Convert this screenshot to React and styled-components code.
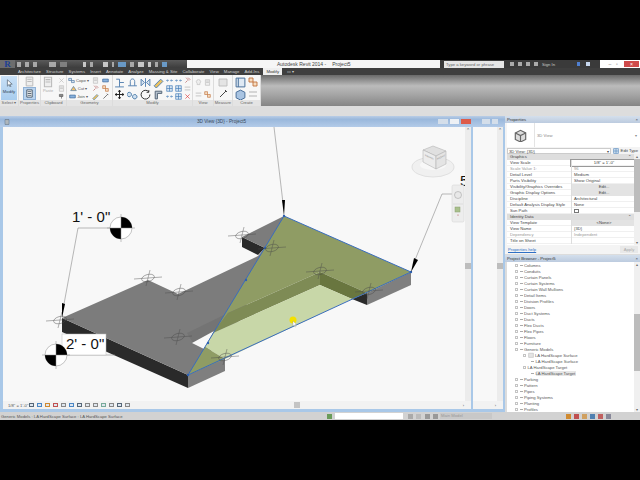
import React from "react";
import styled, { createGlobalStyle } from "styled-components";

const GlobalStyle = createGlobalStyle`
  html, body { margin: 0; padding: 0; background: #000; }
  body { font-family: "Liberation Sans", Arial, sans-serif; }
`;

const Screen = styled.div`
  width: 640px;
  height: 480px;
  display: flex;
  flex-direction: column;
  background: #000;
  overflow: hidden;
`;

const Letterbox = styled.div`
  height: 60px;
  flex: none;
  background: #000;
`;

const TitleBar = styled.div`
  height: 8px;
  flex: none;
  display: flex;
  background: #4a4a4a;
`;

const Logo = styled.div`
  width: 15px;
  display: flex;
  justify-content: center;
  color: #1c3f94;
  background: #6d6d6d;
  font: bold 9px/8px "Liberation Serif", serif;
`;

const QuickAccess = styled.div`
  width: 172px;
  display: flex;
  align-items: center;
  gap: 4px;
  padding-left: 2px;
  box-sizing: border-box;
  background: linear-gradient(#5a5a5a, #3c3c3c);
`;

const QuickIcon = styled.span`
  width: ${(p) => p.$w || 4}px;
  height: 5px;
  margin-right: ${(p) => p.$gap || 0}px;
  background: ${(p) => p.$c || "#b8b8b8"};
  opacity: 0.85;
`;

const TitleCenter = styled.div`
  width: 253px;
  padding-left: 90px;
  box-sizing: border-box;
  background: #f6f6f6;
  color: #444;
  font-size: 5px;
  line-height: 8px;
  white-space: nowrap;
`;

const ProjectName = styled.span`
  margin-left: 6px;
`;

const Help = styled.div`
  flex: 1;
  display: flex;
  align-items: center;
  gap: 4px;
  color: #ccc;
  font-size: 4.2px;
  background: #3a3a3a;
`;

const SearchBox = styled.div`
  width: 60px;
  height: 7px;
  line-height: 7px;
  padding-left: 2px;
  margin-left: 4px;
  margin-right: 2px;
  box-sizing: border-box;
  background: #e6e6e6;
  color: #666;
  white-space: nowrap;
`;

const HelpIcon = styled.span`
  width: ${(p) => p.$w || 4}px;
  height: 4px;
  background: ${(p) => p.$c || "#aaa"};
  margin-left: ${(p) => p.$ml || 0}px;
`;

const WindowButtons = styled.div`
  width: 40px;
  display: flex;
  align-items: center;
  background: #fff;
  color: #666;
  font-size: 5px;
`;

const WinButton = styled.div`
  width: ${(p) => p.$w || 8}px;
  height: 6px;
  line-height: 6px;
  text-align: center;
  color: ${(p) => (p.$close ? "#fff" : "#777")};
  background: ${(p) => (p.$close ? "#cf4b4b" : "transparent")};
  margin-left: ${(p) => p.$ml || 0}px;
`;

const TabBar = styled.div`
  height: 7px;
  flex: none;
  display: flex;
  gap: 5.1px;
  padding-left: 18px;
  background: #3f3f3f;
`;

const Tab = styled.div`
  font-size: 4.3px;
  line-height: 7px;
  white-space: nowrap;
  color: ${(p) => (p.$active ? "#333" : "#d4d4d4")};
  ${(p) => p.$active && "background: #efefef; padding: 0 3px; margin-left: -1px;"}
`;

const Ribbon = styled.div`
  height: 31px;
  flex: none;
  display: flex;
  background: linear-gradient(#6a6a6a 0%, #bbbbbb 35%, #a8a8a8 60%, #858585 100%);
`;

const RibbonPanel = styled.div`
  width: ${(p) => p.$w}px;
  display: flex;
  flex-direction: column;
  background: #f7f7f7;
  border-right: 1px solid #dcdcdc;
  box-sizing: border-box;
`;

const PanelBody = styled.div`
  flex: 1;
  display: flex;
  gap: ${(p) => p.$gap || 1}px;
  padding: 1px 1px 0;
  justify-content: ${(p) => (p.$center ? "center" : "flex-start")};
`;

const PanelLabel = styled.div`
  height: 6px;
  flex: none;
  background: #e4e4e4;
  color: #666;
  text-align: center;
  font-size: 4.2px;
  line-height: 6px;
  white-space: nowrap;
`;

const ModifyButton = styled.div`
  flex: 1;
  display: flex;
  flex-direction: column;
  align-items: center;
  gap: 2px;
  padding-top: 3px;
  background: linear-gradient(#c9e0f6, #a9cdee);
  color: #345;
  font-size: 4.2px;
`;

const ToolColumn = styled.div`
  display: flex;
  flex-direction: column;
  justify-content: ${(p) => p.$just || "space-around"};
  align-items: center;
  width: ${(p) => p.$w || "auto"};
  gap: ${(p) => p.$gap || 0}px;
`;

const ToolRow = styled.div`
  display: flex;
  align-items: center;
  gap: 1px;
  font-size: 4.2px;
  color: #555;
  white-space: nowrap;
`;

const SelectedTool = styled.div`
  padding: 1px;
  background: #b9d3ee;
  border: 1px solid #8fb1d6;
  display: flex;
`;

const FadedLabel = styled.div`
  font-size: 4px;
  color: #aaa;
`;

const Band = styled.div`
  height: 10px;
  flex: none;
  background: #dddddd;
`;

const Main = styled.div`
  flex: 1;
  min-height: 0;
  display: flex;
  background: #d8d8d8;
`;

const ViewArea = styled.div`
  width: 505px;
  display: flex;
  flex-direction: column;
`;

const ViewHeader = styled.div`
  height: 11px;
  flex: none;
  display: grid;
  grid-template-columns: 193px 1fr auto;
  align-items: center;
  background: linear-gradient(#b9cde6, #9ab8dc 30%, #b3cbe8);
  color: #3c4a5a;
  font-size: 4.7px;
  padding-left: 4px;
  box-sizing: border-box;
  white-space: nowrap;
`;

const ViewButtons = styled.div`
  display: flex;
  align-items: center;
  gap: 2px;
  padding-right: 7px;
`;

const ViewButton = styled.span`
  width: ${(p) => p.$w || 8}px;
  height: 5px;
  background: ${(p) => p.$c || "#d4deea"};
  margin-left: ${(p) => p.$ml || 0}px;
`;

const Panes = styled.div`
  flex: 1;
  min-height: 0;
  display: flex;
  gap: 2px;
  padding: 0 2px 3px 3px;
  background: #a9c8e8;
`;

const Pane = styled.div`
  display: flex;
  flex-direction: column;
  background: #f8f8f8;
  flex: ${(p) => (p.$grow ? 1 : "none")};
  width: ${(p) => p.$w || "auto"};
  min-width: 0;
`;

const PaneBody = styled.div`
  flex: 1;
  min-height: 0;
  display: flex;
  justify-content: flex-end;
`;

const Drawing = styled.svg`
  flex: none;
  display: block;
`;

const VScroll = styled.div`
  width: 6px;
  flex: none;
  display: flex;
  flex-direction: column;
  align-items: center;
  background: #ececec;
  color: #555;
  font-size: 5px;
  line-height: 6px;
`;

const VThumb = styled.div`
  width: 6px;
  height: 6px;
  background: #bdbdbd;
  margin-top: ${(p) => p.$top}px;
`;

const PaneFooter = styled.div`
  height: 8px;
  flex: none;
  display: flex;
  align-items: center;
  background: #f2f2f2;
  color: #555;
  font-size: 4.2px;
  padding-left: 5px;
  gap: 1.5px;
`;

const FooterScale = styled.span`
  width: 19px;
  white-space: nowrap;
`;

const FooterThumb = styled.span`
  width: 6px;
  height: 6px;
  background: #c4c4c4;
  margin-left: ${(p) => p.$ml}px;
`;

const SmallIcon = styled.span`
  width: 5px;
  height: 4px;
  border: 0.5px solid ${(p) => p.$c || "#556"};
  background: #dfe6ee;
  box-sizing: border-box;
  margin-right: 1.5px;
`;

const FooterArrow = styled.span`
  margin-left: auto;
  margin-right: 7px;
  font-size: 4px;
`;

const SidePanel = styled.div`
  flex: 1;
  display: flex;
  flex-direction: column;
  background: #dcdcdc;
  min-width: 0;
`;

const SideHeader = styled.div`
  height: 7px;
  flex: none;
  display: flex;
  justify-content: space-between;
  padding: 0 2px;
  background: linear-gradient(#d4dfec, #bccbdf);
  color: #333;
  font-size: 4.2px;
  line-height: 7px;
  white-space: nowrap;
`;

const PropertiesBox = styled.div`
  height: 131px;
  flex: none;
  display: flex;
  flex-direction: column;
  background: #f4f4f4;
`;

const TypeSelector = styled.div`
  height: 24px;
  flex: none;
  display: flex;
  align-items: center;
  margin-left: 2px;
  background: #fff;
  color: #888;
  font-size: 4.2px;
  padding-right: 3px;
`;

const TypeThumb = styled.div`
  width: 27px;
  height: 100%;
  display: flex;
  align-items: center;
  justify-content: center;
  border-right: 1px solid #e4e4e4;
  margin-right: 2px;
`;

const TypeName = styled.span`
  flex: 1;
`;

const InstanceRow = styled.div`
  height: 7px;
  flex: none;
  display: flex;
  align-items: center;
  gap: 2px;
  padding: 0 2px;
  font-size: 4.2px;
  color: #444;
  white-space: nowrap;
`;

const InstanceSelect = styled.div`
  flex: 1;
  height: 6px;
  line-height: 6px;
  padding: 0 1px;
  display: flex;
  justify-content: space-between;
  background: #fff;
  border: 0.5px solid #ccc;
  box-sizing: border-box;
`;

const PropertyArea = styled.div`
  flex: 1;
  min-height: 0;
  display: flex;
  padding-left: 2px;
`;

const PropertyList = styled.div`
  flex: 1;
  min-width: 0;
  background: #fff;
  display: flex;
  flex-direction: column;
`;

const GroupRow = styled.div`
  height: 6px;
  flex: none;
  display: flex;
  justify-content: space-between;
  padding: 0 3px;
  background: #dedede;
  color: #444;
  font-size: 4.2px;
  line-height: 6px;
`;

const PropRow = styled.div`
  height: 6px;
  flex: none;
  display: grid;
  grid-template-columns: 64px 1fr;
  font-size: 4.2px;
  line-height: 6px;
  color: ${(p) => (p.$muted ? "#999" : "#444")};
  white-space: nowrap;
  box-shadow: inset 0 -0.5px 0 #e2e2e2;
`;

const PropName = styled.div`
  padding-left: 3px;
`;

const PropValue = styled.div`
  display: flex;
  align-items: center;
  padding-left: 2px;
  border-left: 0.5px solid #ddd;
  ${(p) => p.$button && "background: #e3e3e3; justify-content: center;"}
  ${(p) => p.$boxed && "justify-content: center; outline: 0.5px solid #999; outline-offset: -0.5px;"}
`;

const CheckBox = styled.span`
  width: 4.5px;
  height: 4.5px;
  background: #fff;
  border: 0.5px solid #777;
  box-sizing: border-box;
`;

const SideScroll = styled.div`
  width: 6px;
  flex: none;
  display: flex;
  flex-direction: column;
  align-items: center;
  background: #f0f0f0;
  color: #666;
  font-size: 4px;
  line-height: 5px;
`;

const SideThumb = styled.div`
  width: 6px;
  flex: none;
  height: ${(p) => p.$h}px;
  margin-top: ${(p) => p.$top}px;
  background: #bcbcbc;
`;

const ArrowEnd = styled.div`
  margin-top: auto;
`;

const ApplyRow = styled.div`
  height: 9px;
  flex: none;
  display: flex;
  align-items: center;
  justify-content: space-between;
  padding-left: 3px;
  font-size: 4.2px;
  background: #f4f4f4;
`;

const HelpLink = styled.span`
  color: #2f6fc4;
  text-decoration: underline;
`;

const ApplyButton = styled.span`
  width: 18px;
  height: 7px;
  line-height: 7px;
  text-align: center;
  background: #e8e8e8;
  color: #aaa;
  margin-right: 2px;
`;

const PanelGap = styled.div`
  height: 1px;
  flex: none;
`;

const BrowserBox = styled.div`
  flex: 1;
  min-height: 0;
  display: flex;
  background: #fff;
  margin-left: 2px;
`;

const BrowserList = styled.div`
  flex: 1;
  min-width: 0;
  overflow: hidden;
`;

const TreeRow = styled.div`
  height: 6px;
  display: flex;
  align-items: center;
  gap: 1.5px;
  padding-left: ${(p) => p.$indent}px;
  font-size: 4.2px;
  color: #555;
  white-space: nowrap;
`;

const TreeToggle = styled.span`
  width: 3px;
  height: 3px;
  border: 0.5px solid #c4c4c4;
  box-sizing: border-box;
`;

const TreeDash = styled.span`
  width: 3px;
  height: 0.5px;
  background: #aaa;
`;

const TreeName = styled.span`
  background: ${(p) => (p.$selected ? "#e6e6e6" : "transparent")};
  padding-right: 1px;
`;

const StatusBar = styled.div`
  height: 8px;
  flex: none;
  display: flex;
  align-items: center;
  background: #d2d2d2;
  color: #555;
  font-size: 4.2px;
  white-space: nowrap;
`;

const StatusText = styled.div`
  width: 327px;
  padding-left: 1px;
  box-sizing: border-box;
`;

const StatusField = styled.div`
  width: ${(p) => p.$w}px;
  height: 6px;
  line-height: 6px;
  padding-left: 1px;
  margin-left: ${(p) => p.$ml || 0}px;
  background: ${(p) => p.$bg || "#fff"};
  color: #999;
  box-sizing: border-box;
`;

const StatusIcons = styled.div`
  margin-left: ${(p) => p.$ml}px;
  display: flex;
  gap: ${(p) => p.$gap || 3}px;
  align-items: center;
`;

const StatusDot = styled.span`
  width: 5px;
  height: 5px;
  background: ${(p) => p.$c};
`;

// 10x10 ribbon glyphs, one entry per kind of tool
const glyphs = {
  cursor: [["M3 1v8l2-2 1.5 3 1-.5L6 6.5h3z", "#fff", "#567"]],
  doc: [["M2 1h6v8H2z", "#fff", "#345"], ["M3 3h4M3 5h4M3 7h4", "none", "#345"]],
  faded: [["M2 1h6v8H2z", "#eee", "#bbb"], ["M3 3h4M3 5h4", "none", "#bbb"]],
  x: [["M2 2l6 6M8 2l-6 6", "none", "#bbb"]],
  redx: [["M2 2l6 6M8 2l-6 6", "none", "#d33"]],
  brush: [["M2 2h5v3H2zM5 5v3", "#8a8a8a", "#555"]],
  cope: [["M1 2h4v3H1zM5 5h4v3H5z", "#d9e4f2", "#46739f"]],
  cut: [["M1 8l4-6 4 6z", "#f0c070", "#46739f"]],
  join: [["M1 3h8v4H1z", "#8ab2dc", "#2b5d94"]],
  wall: [["M1 9h8M2 2h3v7M5 5h4", "none", "#5b86b3"]],
  bump: [["M1 8h8M3 8V4c0-3 4-3 4 0v4", "none", "#5b86b3"]],
  mirror: [["M5 1v8M1 2l3 3-3 3zM9 2L6 5l3 3z", "#dbe6f2", "#5b86b3"]],
  pencil: [["M1 8l6-6 2 2-6 6z", "#e8c060", "#5b86b3"]],
  move: [["M5 1v8M1 5h8M5 1L4 2.5M5 1l1 1.5M5 9L4 7.5M5 9l1-1.5M1 5l1.5-1M1 5l1.5 1M9 5L7.5 4M9 5L7.5 6", "none", "#222"]],
  copyring: [["M2 3a2 2 0 1 0 .1 0M7 5a2 2 0 1 0 .1 0", "#cfe0f0", "#4a7aa8"]],
  rotate: [["M8 2.5A4 4 0 1 0 9 5M8 1v2H6", "none", "#333"]],
  trim: [["M2 2h6v2H4v5H2z", "#b8c4d0", "#567"]],
  arrows: [["M1 5h3M6 5h3M2.5 3.5L1 5l1.5 1.5M7.5 3.5L9 5 7.5 6.5", "none", "#3d78b5"]],
  grid: [["M1 1h8v8H1zM5 1v8M1 5h8", "#d6e4f2", "#3d78b5"]],
  pin: [["M3 1l4 4M2 8l3-3M6 1l3 3", "none", "#b05050"]],
  dim: [["M1 3h8M1 7h8", "none", "#aaa"]],
  shovel: [["M2 8l6-6M7 1l2 2", "none", "#333"]],
  lamp: [["M3 6a3 3 0 1 1 4 0v2H3z", "#eee", "#bbb"]],
  block: [["M1 2h8v7H1z", "#e4e4e4", "#bbb"]],
  part: [["M1 1h8v8H1zM3 1v8", "#dfe9f4", "#4a6f9a"]],
  box: [["M1 3l4-2 4 2v5l-4 2-4-2z", "#a9c4e2", "#4a6f9a"]],
  cube: [["M1 3l4-2 4 2v5l-4 2-4-2z", "#dcdcdc", "#666"], ["M1 3l4 2 4-2M5 5v5", "none", "#666"]],
  group: [["M1 1h4v4H1zM5 5h4v4H5z", "#f6dcc0", "#c0703a"]],
};

function Glyph({ k, size = 7 }) {
  return (
    <svg width={size} height={size} viewBox="0 0 10 10">
      {glyphs[k].map(([d, fill, stroke], i) => (
        <path key={i} d={d} fill={fill} stroke={stroke} strokeWidth="0.9" />
      ))}
    </svg>
  );
}

const tabs = ["Architecture", "Structure", "Systems", "Insert", "Annotate", "Analyze", "Massing & Site", "Collaborate", "View", "Manage", "Add-Ins"];

const graphicsRows = [
  ["View Scale", `1/8" = 1'-0"`, "boxed"],
  ["Scale Value    1:", "96", "", true],
  ["Detail Level", "Medium"],
  ["Parts Visibility", "Show Original"],
  ["Visibility/Graphics Overrides", "Edit...", "button"],
  ["Graphic Display Options", "Edit...", "button"],
  ["Discipline", "Architectural"],
  ["Default Analysis Display Style", "None"],
  ["Sun Path", <CheckBox />],
];

const identityRows = [
  ["View Template", "<None>", "button"],
  ["View Name", "{3D}"],
  ["Dependency", "Independent", "", true],
  ["Title on Sheet", ""],
];

const treeBefore = ["Columns", "Conduits", "Curtain Panels", "Curtain Systems", "Curtain Wall Mullions", "Detail Items", "Division Profiles", "Doors", "Duct Systems", "Ducts", "Flex Ducts", "Flex Pipes", "Floors", "Furniture"];
const treeAfter = ["Parking", "Pattern", "Pipes", "Piping Systems", "Planting", "Profiles"];

const markers = [[242, 235], [272, 248], [148, 278], [179, 292], [178, 337], [60, 320], [320, 271], [369, 291], [225, 357]];

function LevelMarker({ x, y }) {
  return (
    <g fill="none" stroke="#4a4a4a" strokeWidth="0.5" opacity="0.85">
      <ellipse cx={x} cy={y} rx="6.5" ry="3.5" transform={`rotate(-15 ${x} ${y})`} />
      <path d={`M${x - 14} ${y + 1}L${x + 14} ${y - 1}M${x + 2} ${y - 8}L${x - 2} ${y + 8}`} />
    </g>
  );
}

function LevelHead({ x, y }) {
  const r = 11;
  return (
    <g>
      <circle cx={x} cy={y} r={r} fill="#fff" stroke="#888" strokeWidth="0.5" />
      <path d={`M${x} ${y - r}A${r} ${r} 0 0 1 ${x + r} ${y}L${x} ${y}z`} fill="#000" />
      <path d={`M${x} ${y + r}A${r} ${r} 0 0 1 ${x - r} ${y}L${x} ${y}z`} fill="#000" />
      <path d={`M${x} ${y - 14}V${y + 14}M${x - 14} ${y}H${x + 14}`} stroke="#888" strokeWidth="0.5" />
    </g>
  );
}

// drawn in page coordinates, the viewBox starts where the pane's canvas starts
function ModelDrawing() {
  return (
    <Drawing width="460" height="274" viewBox="5 127 460 274">
      {/* slab sides */}
      <polygon points="62,318 62,332 188,388 188,375" fill="#2a2a2a" />
      <polygon points="188,375 188,388 225,371 225,358" fill="#7f7f7f" />
      <polygon points="242,237 242,247 258,255 265,248" fill="#2a2a2a" />
      <polygon points="352,299 367,305 367,293" fill="#2a2a2a" />
      <polygon points="367,293 367,305 411,285 411,272" fill="#7f7f7f" />
      {/* slab top */}
      <polygon points="62,318 148,280 178,294 258,256 265,248 242,237 284,216 240,320 188,375" fill="#7c7c7c" />
      <polygon points="187,333 228,313 213,333 193,343" fill="#747474" />
      {/* white notch under the surface */}
      <polygon points="192,343 214,331 204,349" fill="#f8f8f8" />
      {/* hardscape surface */}
      <polygon points="284,216 411,272 367,293 320,272 228,313 213,333 205,347 188,375" fill="#8f9c64" />
      <polygon points="320,272 320,285 213,333 228,313" fill="#7e8b55" />
      <polygon points="320,272 367,293 352,299 320,285" fill="#69763f" />
      <polygon points="320,285 352,299 225,359 205,347 213,333" fill="#c8d7a8" />
      <polygon points="205,347 225,359 188,375" fill="#8f9c64" />
      <polygon points="284,216 411,272 188,375" fill="none" stroke="#3a6dbd" strokeWidth="1" />
      {[[284, 216], [411, 272], [188, 375], [246, 280], [208, 343], [265, 248]].map(([x, y]) => (
        <circle key={`${x}-${y}`} cx={x} cy={y} r="1.2" fill="#2f62b5" />
      ))}
      {markers.map(([x, y]) => (
        <LevelMarker key={`${x}-${y}`} x={x} y={y} />
      ))}
      {/* cursor highlight */}
      <circle cx="293" cy="320" r="3.5" fill="#f4e000" />
      <path d="M293 321v5l1.2-1 1 2 .8-.4-1-2h1.6z" fill="#fff" stroke="#888" strokeWidth="0.3" />
      {/* leaders */}
      <g fill="none" stroke="#8a8a8a" strokeWidth="0.6">
        <path d="M274 127L283 203" />
        <path d="M460 194H442L415 260" />
        <path d="M110 228H78L64 304" />
        <path d="M62 355H115" />
      </g>
      <path d="M282 200L285 200L284 216z" fill="#000" />
      <path d="M414 258L418 260L411 272z" fill="#000" />
      <path d="M62 303L65 304L62 318z" fill="#000" />
      <rect x="62" y="334" width="44" height="21" fill="#fff" stroke="#bbb" strokeWidth="0.5" />
      <LevelHead x={121} y={228} />
      <LevelHead x={56} y={355} />
      <text x="72" y="222" fontSize="15" fontFamily="Liberation Sans, sans-serif" fill="#111">1' - 0"</text>
      <text x="66" y="349" fontSize="15" fontFamily="Liberation Sans, sans-serif" fill="#111">2' - 0"</text>
      <text x="460" y="186" fontSize="15" fontFamily="Liberation Sans, sans-serif" fill="#111">5</text>
      {/* view cube */}
      <ellipse cx="433" cy="167" rx="21" ry="10" fill="#f0f0f0" stroke="#e0e0e0" />
      <ellipse cx="433" cy="165" rx="13" ry="5" fill="#f8f8f8" />
      <polygon points="423,150 433,146 446,151 436,156" fill="#e0e0e0" stroke="#aaa" strokeWidth="0.5" />
      <polygon points="423,150 436,156 436,169 423,162" fill="#ececec" stroke="#aaa" strokeWidth="0.5" />
      <polygon points="436,156 446,151 446,164 436,169" fill="#e4e4e4" stroke="#aaa" strokeWidth="0.5" />
      <text transform="translate(425 156) skewY(25)" fontSize="2.6" fontFamily="Liberation Sans, sans-serif" fill="#888">FRONT</text>
      <text transform="translate(437 160) skewY(-25)" fontSize="2.6" fontFamily="Liberation Sans, sans-serif" fill="#888">RIGHT</text>
      {/* navigation bar */}
      <rect x="452" y="185" width="12" height="37" rx="1.5" fill="#ededed" stroke="#d0d0d0" strokeWidth="0.5" />
      <circle cx="458" cy="195" r="3.5" fill="#e8e8e8" stroke="#999" strokeWidth="0.5" />
      <path d="M453 204H463" stroke="#ccc" strokeWidth="0.5" />
      <rect x="455" y="207" width="5" height="5" fill="#a9c08c" stroke="#8aa070" strokeWidth="0.5" />
      <circle cx="458" cy="215" r="0.6" fill="#b05050" />
    </Drawing>
  );
}

function Ribbons() {
  return (
    <Ribbon>
      <RibbonPanel $w={19}>
        <PanelBody>
          <ModifyButton>
            <Glyph k="cursor" size={8} />
            Modify
          </ModifyButton>
        </PanelBody>
        <PanelLabel>Select ▾</PanelLabel>
      </RibbonPanel>
      <RibbonPanel $w={22}>
        <PanelBody $center>
          <ToolColumn>
            <Glyph k="faded" size={11} />
            <SelectedTool>
              <Glyph k="doc" size={9} />
            </SelectedTool>
          </ToolColumn>
        </PanelBody>
        <PanelLabel>Properties</PanelLabel>
      </RibbonPanel>
      <RibbonPanel $w={26}>
        <PanelBody $gap={4}>
          <ToolColumn $just="flex-start" $w="15px">
            <Glyph k="faded" size={12} />
            <FadedLabel>Paste</FadedLabel>
          </ToolColumn>
          <ToolColumn>
            <Glyph k="x" />
            <Glyph k="faded" />
            <Glyph k="brush" />
          </ToolColumn>
        </PanelBody>
        <PanelLabel>Clipboard</PanelLabel>
      </RibbonPanel>
      <RibbonPanel $w={46}>
        <PanelBody $gap={3}>
          <ToolColumn>
            <ToolRow><Glyph k="cope" />Cope ▾</ToolRow>
            <ToolRow><Glyph k="cut" />Cut ▾</ToolRow>
            <ToolRow><Glyph k="join" />Join ▾</ToolRow>
          </ToolColumn>
          <ToolColumn>
            <Glyph k="faded" />
            <Glyph k="pin" />
            <Glyph k="pencil" />
          </ToolColumn>
          <ToolColumn>
            <Glyph k="join" />
            <Glyph k="group" />
            <Glyph k="shovel" />
          </ToolColumn>
        </PanelBody>
        <PanelLabel>Geometry</PanelLabel>
      </RibbonPanel>
      <RibbonPanel $w={80}>
        <PanelBody $gap={2}>
          <ToolColumn><Glyph k="wall" size={11} /><Glyph k="move" size={11} /></ToolColumn>
          <ToolColumn><Glyph k="bump" size={11} /><Glyph k="copyring" size={11} /></ToolColumn>
          <ToolColumn><Glyph k="mirror" size={11} /><Glyph k="rotate" size={11} /></ToolColumn>
          <ToolColumn><Glyph k="pencil" size={11} /><Glyph k="trim" size={11} /></ToolColumn>
          <ToolColumn><Glyph k="arrows" /><Glyph k="grid" /><Glyph k="arrows" /></ToolColumn>
          <ToolColumn><Glyph k="arrows" /><Glyph k="grid" /><Glyph k="grid" /></ToolColumn>
          <ToolColumn><Glyph k="pin" /><Glyph k="dim" /><Glyph k="redx" /></ToolColumn>
        </PanelBody>
        <PanelLabel>Modify</PanelLabel>
      </RibbonPanel>
      <RibbonPanel $w={21}>
        <PanelBody $center $gap={2}>
          <ToolColumn><Glyph k="lamp" /><Glyph k="dim" /></ToolColumn>
          <ToolColumn><Glyph k="faded" /><Glyph k="group" /></ToolColumn>
        </PanelBody>
        <PanelLabel>View</PanelLabel>
      </RibbonPanel>
      <RibbonPanel $w={19}>
        <PanelBody $center>
          <ToolColumn><Glyph k="block" size={10} /><Glyph k="shovel" size={10} /></ToolColumn>
        </PanelBody>
        <PanelLabel>Measure</PanelLabel>
      </RibbonPanel>
      <RibbonPanel $w={28}>
        <PanelBody $center $gap={2}>
          <ToolColumn><Glyph k="part" size={11} /><Glyph k="box" size={11} /></ToolColumn>
          <ToolColumn><Glyph k="group" size={10} /><Glyph k="dim" size={10} /></ToolColumn>
        </PanelBody>
        <PanelLabel>Create</PanelLabel>
      </RibbonPanel>
    </Ribbon>
  );
}

function PropertiesPanel() {
  const renderRow = ([name, value, kind, muted]) => (
    <PropRow key={name} $muted={muted}>
      <PropName>{name}</PropName>
      <PropValue $button={kind === "button"} $boxed={kind === "boxed"}>{value}</PropValue>
    </PropRow>
  );
  return (
    <>
      <SideHeader>Properties<span>×</span></SideHeader>
      <PropertiesBox>
        <TypeSelector>
          <TypeThumb>
            <Glyph k="cube" size={13} />
          </TypeThumb>
          <TypeName>3D View</TypeName>▾
        </TypeSelector>
        <InstanceRow>
          <InstanceSelect>3D View: {"{3D}"}<span>▾</span></InstanceSelect>
          <Glyph k="grid" size={6} />
          Edit Type
        </InstanceRow>
        <PropertyArea>
          <PropertyList>
            <GroupRow>Graphics<span>⌃</span></GroupRow>
            {graphicsRows.map(renderRow)}
            <GroupRow>Identity Data<span>⌃</span></GroupRow>
            {identityRows.map(renderRow)}
          </PropertyList>
          <SideScroll>
            ▴
            <SideThumb $h={53} $top={0} />
            <ArrowEnd>▾</ArrowEnd>
          </SideScroll>
        </PropertyArea>
        <ApplyRow>
          <HelpLink>Properties help</HelpLink>
          <ApplyButton>Apply</ApplyButton>
        </ApplyRow>
      </PropertiesBox>
    </>
  );
}

function BrowserPanel() {
  const plain = (name) => (
    <TreeRow key={name} $indent={8}>
      <TreeToggle />
      <TreeDash />
      <TreeName>{name}</TreeName>
    </TreeRow>
  );
  return (
    <>
      <SideHeader>Project Browser - Project5<span>×</span></SideHeader>
      <BrowserBox>
        <BrowserList>
          {treeBefore.map(plain)}
          {plain("Generic Models")}
          <TreeRow $indent={16}>
            <TreeToggle />
            <Glyph k="block" size={6} />
            <TreeName>LA HardScape Surface</TreeName>
          </TreeRow>
          <TreeRow $indent={24}>
            <TreeDash />
            <TreeName>LA HardScape Surface</TreeName>
          </TreeRow>
          <TreeRow $indent={16}>
            <TreeToggle />
            <TreeName>LA HardScape Target</TreeName>
          </TreeRow>
          <TreeRow $indent={24}>
            <TreeDash />
            <TreeName $selected>LA HardScape Target</TreeName>
          </TreeRow>
          {treeAfter.map(plain)}
        </BrowserList>
        <SideScroll>
          ▴
          <SideThumb $h={57} $top={47} />
          <ArrowEnd>▾</ArrowEnd>
        </SideScroll>
      </BrowserBox>
    </>
  );
}

export default function App() {
  return (
    <Screen>
      <GlobalStyle />
      <Letterbox />
      <TitleBar>
        <Logo>R</Logo>
        <QuickAccess>
          <QuickIcon />
          <QuickIcon />
          <QuickIcon $gap={8} />
          <QuickIcon $w={7} />
          <QuickIcon $w={7} $gap={12} $c="#888" />
          <QuickIcon $w={3} $c="#ddd" />
          <QuickIcon $w={3} $gap={6} />
          <QuickIcon $w={5} $c="#ddd" />
          <QuickIcon $w={2} />
          <QuickIcon $w={8} $c="#6fa7dc" />
          <QuickIcon />
          <QuickIcon $w={6} $c="#ddd" />
          <QuickIcon $w={3} $c="#ddd" />
          <QuickIcon $w={3} />
          <QuickIcon $w={5} $c="#6fa7dc" />
        </QuickAccess>
        <TitleCenter>Autodesk Revit 2014 -<ProjectName>Project5</ProjectName></TitleCenter>
        <Help>
          <SearchBox>Type a keyword or phrase</SearchBox>
          <HelpIcon />
          <HelpIcon />
          <HelpIcon />
          <HelpIcon />
          <span>Sign In</span>
          <HelpIcon $w={3} $c="#4f7fd0" $ml={18} />
          <HelpIcon $w={4} $c="#c8d8ee" $ml={2} />
        </Help>
        <WindowButtons>
          <WinButton $w={6} $ml={7}>–</WinButton>
          <WinButton $w={8}>▫</WinButton>
          <WinButton $close $w={15} $ml={3}>×</WinButton>
        </WindowButtons>
      </TitleBar>
      <TabBar>
        {tabs.map((t) => (
          <Tab key={t}>{t}</Tab>
        ))}
        <Tab $active>Modify</Tab>
        <Tab>▭ ▾</Tab>
      </TabBar>
      <Ribbons />
      <Band />
      <Main>
        <ViewArea>
          <ViewHeader>
            <Glyph k="doc" size={6} />
            <span>3D View {"{3D}"} - Project5</span>
            <ViewButtons>
              <ViewButton $w={10} />
              <ViewButton $w={9} $c="#eef1f5" />
              <ViewButton $w={10} $c="#dd5b4a" />
              <ViewButton $ml={9} />
              <ViewButton $w={6} />
            </ViewButtons>
          </ViewHeader>
          <Panes>
            <Pane $grow>
              <PaneBody>
                <ModelDrawing />
                <VScroll>
                  ⌃
                  <VThumb $top={130} />
                </VScroll>
              </PaneBody>
              <PaneFooter>
                <FooterScale>1/8" = 1'-0"</FooterScale>
                {["#567", "#4a86c5", "#d08a30", "#c05050", "#888", "#4a86c5", "#567", "#888", "#888", "#7a9", "#888", "#567", "#888"].map((c, i) => (
                  <SmallIcon key={i} $c={c} />
                ))}
                <FooterThumb $ml={161} />
                <FooterArrow>›</FooterArrow>
              </PaneFooter>
            </Pane>
            <Pane $w="30px">
              <PaneBody>
                <VScroll>
                  ⌃
                  <VThumb $top={130} />
                </VScroll>
              </PaneBody>
              <PaneFooter>
                <FooterArrow>›</FooterArrow>
              </PaneFooter>
            </Pane>
          </Panes>
        </ViewArea>
        <SidePanel>
          <PropertiesPanel />
          <PanelGap />
          <BrowserPanel />
        </SidePanel>
      </Main>
      <StatusBar>
        <StatusText>Generic Models : LA HardScape Surface : LA HardScape Surface</StatusText>
        <StatusDot $c="#6a9c5a" />
        <StatusField $w={68} $ml={3} />
        <StatusIcons $ml={5}>
          <StatusDot $c="#aaa" />
          <StatusDot $c="#bbb" />
        </StatusIcons>
        <StatusIcons $ml={4}>
          <StatusDot $c="#999" />
          <StatusDot $c="#999" />
        </StatusIcons>
        <StatusField $w={52} $ml={2} $bg="#c8c8c8">Main Model</StatusField>
        <StatusIcons $ml={74} $gap={3}>
          <StatusDot $c="#d08a30" />
          <StatusDot $c="#c05050" />
          <StatusDot $c="#d0a060" />
          <StatusDot $c="#5080b0" />
          <StatusDot $c="#c06060" />
          <StatusDot $c="#889" />
        </StatusIcons>
      </StatusBar>
      <Letterbox />
    </Screen>
  );
}
